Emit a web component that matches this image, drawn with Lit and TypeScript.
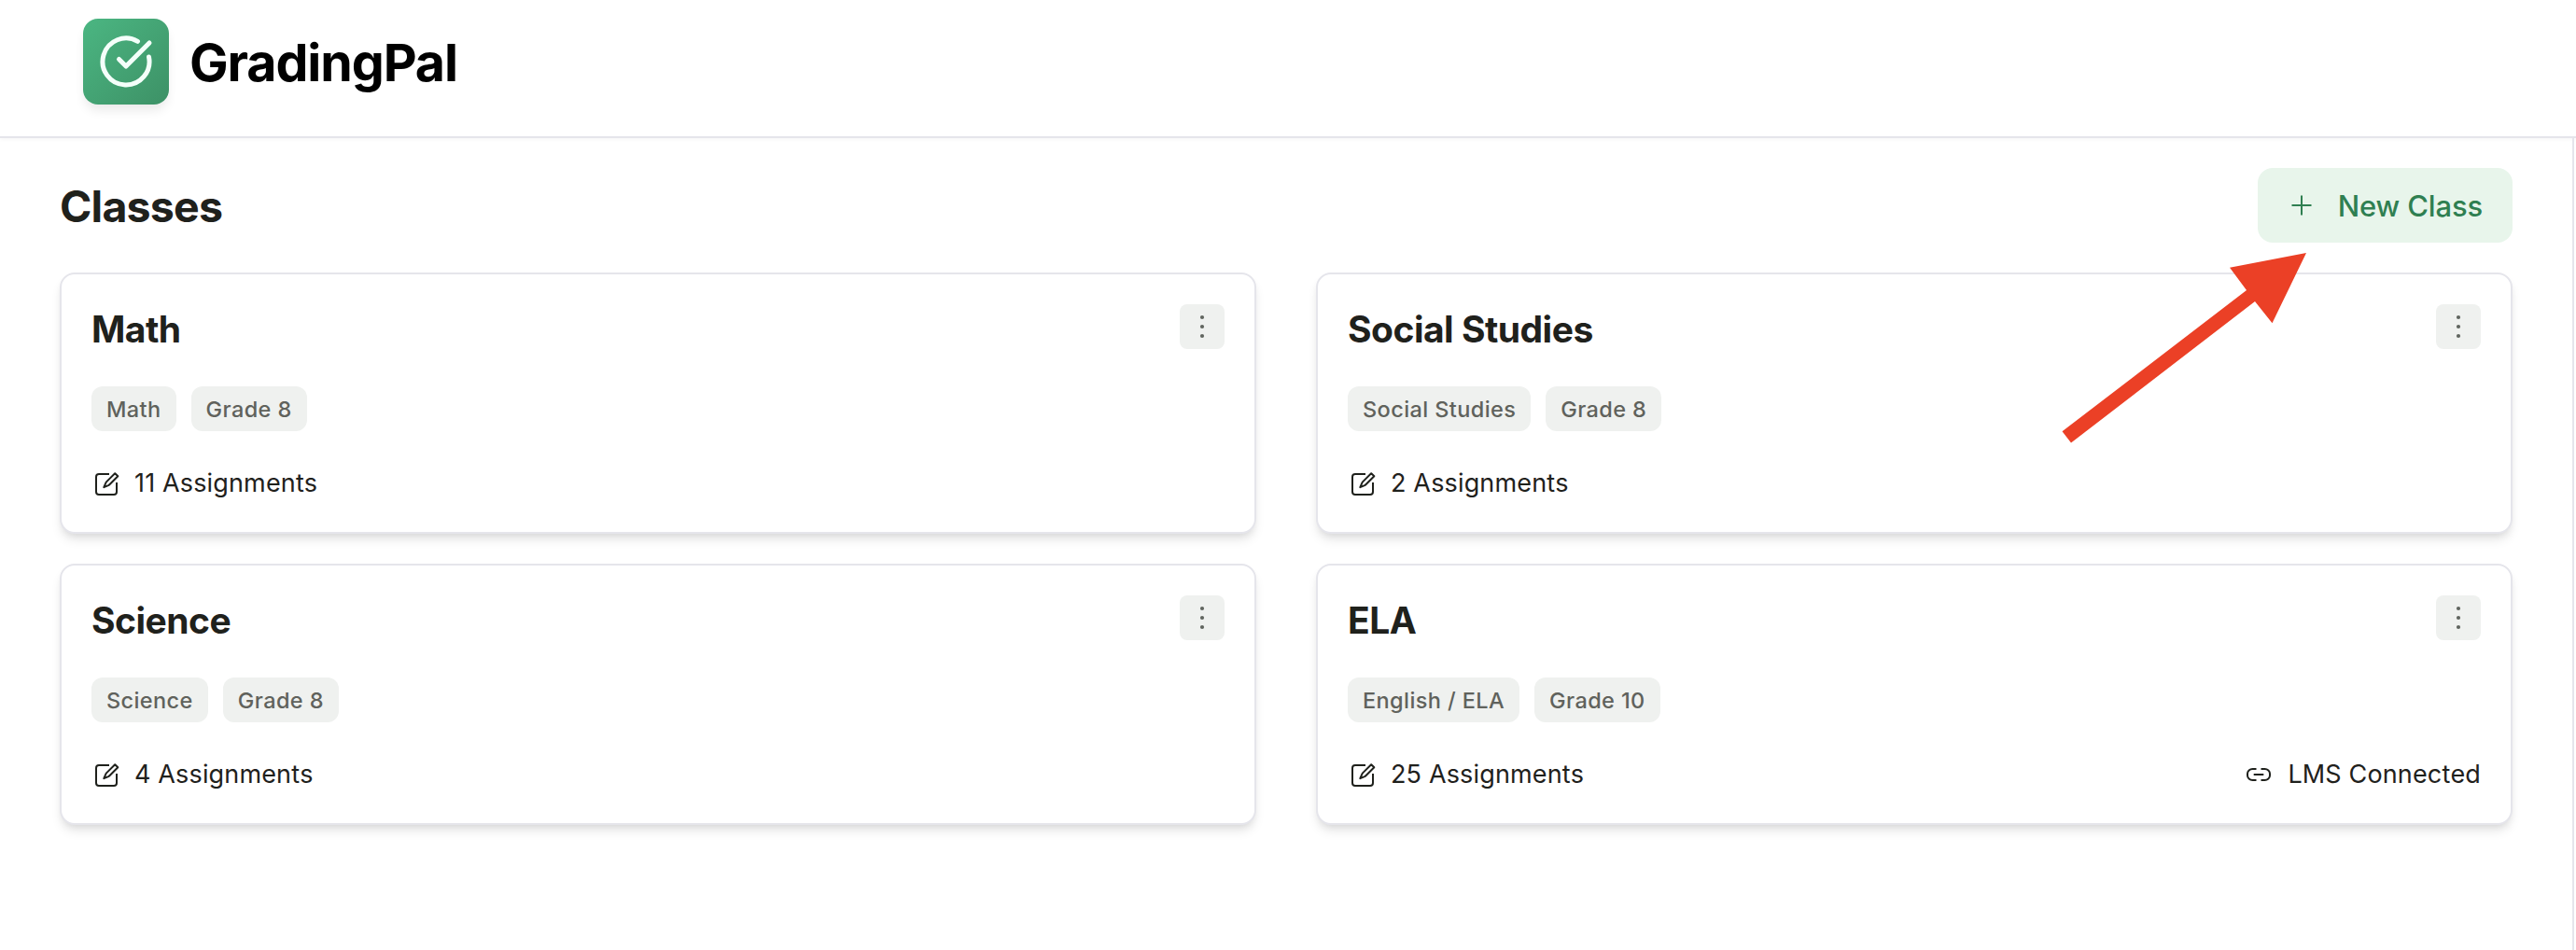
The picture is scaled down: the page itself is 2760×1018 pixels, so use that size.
import { LitElement, html, css, svg, nothing } from "lit";
import { customElement, property } from "lit/decorators.js";

interface ClassInfo {
  name: string;
  subject: string;
  grade: string;
  assignments: number;
  lms?: boolean;
}

const CLASSES: ClassInfo[] = [
  { name: "Math", subject: "Math", grade: "Grade 8", assignments: 11 },
  { name: "Social Studies", subject: "Social Studies", grade: "Grade 8", assignments: 2 },
  { name: "Science", subject: "Science", grade: "Grade 8", assignments: 4 },
  { name: "ELA", subject: "English / ELA", grade: "Grade 10", assignments: 25, lms: true },
];

@customElement("class-card")
export class ClassCard extends LitElement {
  @property({ attribute: false }) info!: ClassInfo;

  static styles = css`
    :host {
      box-sizing: border-box;
      display: flex;
      flex-direction: column;
      height: 280px;
      padding: 32px 32px 28px;
      border: 2px solid #e5e5eb;
      border-radius: 16px;
      background: #fff;
      box-shadow: 0 8px 12px -2px rgba(0, 0, 0, 0.1), 0 4px 8px -4px rgba(0, 0, 0, 0.1);
    }
    .top, .bottom { display: flex; flex: none; justify-content: space-between; }
    .top { height: 88px; align-items: flex-start; }
    .title {
      margin: 0;
      font-size: 39px;
      line-height: 54px;
      font-weight: 700;
      letter-spacing: -0.5px;
    }
    .menu {
      display: grid;
      place-items: center;
      width: 48px;
      height: 48px;
      padding: 0;
      border: 0;
      border-radius: 8px;
      background: #eff1ef;
      color: #60655f;
    }
    .tags { display: flex; flex: none; height: 48px; gap: 16px; }
    .tag {
      height: 48px;
      padding: 0 16px;
      border-radius: 12px;
      background: #eff1ef;
      color: #60625c;
      font-size: 23.5px;
      line-height: 49px;
      font-weight: 500;
      letter-spacing: 0.4px;
      white-space: nowrap;
    }
    .bottom {
      margin-top: 34px;
      font-size: 27px;
      letter-spacing: 0.15px;
      font-kerning: none;
    }
    .meta { display: flex; align-items: center; gap: 16px; white-space: nowrap; }
    .label { line-height: 44px; }
    svg { display: block; }
  `;

  render() {
    const c = this.info;
    return html`
      <div class="top">
        <h2 class="title">${c.name}</h2>
        <button class="menu" aria-label="Class options">
          <svg width="30" height="30" viewBox="0 0 30 30" fill="currentColor">
            <circle cx="15" cy="5" r="2.1" /><circle cx="15" cy="15" r="2.1" /><circle cx="15" cy="25" r="2.1" />
          </svg>
        </button>
      </div>
      <div class="tags"><span class="tag">${c.subject}</span><span class="tag">${c.grade}</span></div>
      <div class="bottom">
        <span class="meta">
          <svg width="30" height="30" viewBox="0 -1 30 30" fill="none" stroke="currentColor" stroke-width="2" stroke-linejoin="round">
            <path d="M19 4H8Q5 4 5 7V23Q5 26 8 26H24Q27 26 27 23V13" />
            <path d="M13.3 18.2L15.4 13.4Q15.8 12.6 16.5 11.9L25.2 3.2L28.3 6.3L19.6 15Q18.9 15.7 18.1 16.1Z" />
          </svg>
          <span class="label">${c.assignments} Assignments</span>
        </span>
        ${c.lms
          ? html`<span class="meta">
              <svg width="30" height="30" viewBox="0 -1 30 30" fill="none" stroke="currentColor" stroke-width="2">
                <path d="M12.5 8H8.5A5.5 5 0 0 0 3 13V15A5.5 5 0 0 0 8.5 20H12.5M17.5 8H21.5A5.5 5 0 0 1 27 13V15A5.5 5 0 0 1 21.5 20H17.5M9.7 14H20.3" />
              </svg>
              <span class="label">LMS Connected</span>
            </span>`
          : nothing}
      </div>
    `;
  }
}

@customElement("app-root")
export class AppRoot extends LitElement {
  static styles = css`
    :host {
      position: relative;
      display: flex;
      flex-direction: column;
      height: 1018px;
      overflow: hidden;
      background: #fff;
      color: #1f211c;
      font-family: Inter, "Liberation Sans", sans-serif;
    }
    .header {
      box-sizing: border-box;
      display: flex;
      gap: 22px;
      height: 148px;
      padding: 20px 0 0 89px;
      border-bottom: 2px solid #e5e5eb;
      box-shadow: 0 2px 4px rgba(0, 0, 0, 0.03);
    }
    .logo {
      display: grid;
      place-items: center;
      width: 92px;
      height: 92px;
      border-radius: 16px;
      background: linear-gradient(135deg, #4bb682, #3d9166);
      box-shadow: 0 8px 12px -2px rgba(0, 0, 0, 0.09);
    }
    .brand {
      color: #000;
      font-size: 55.5px;
      font-weight: 700;
      line-height: 94px;
      letter-spacing: -1.1px;
    }
    .main {
      box-sizing: border-box;
      flex: 1;
      margin-right: 2px;
      padding: 32px 64px 0;
      border-right: 2px solid #e5e5eb;
    }
    .heading { display: flex; justify-content: space-between; height: 112px; }
    .page-title {
      margin: 0;
      font-size: 46.5px;
      line-height: 82px;
      font-weight: 700;
      letter-spacing: -0.8px;
    }
    .new {
      display: flex;
      align-items: center;
      gap: 24px;
      height: 80px;
      padding: 0 32px;
      border: 0;
      border-radius: 16px;
      background: #e8f5eb;
      color: #2f7f51;
      font: 500 31px Inter, "Liberation Sans", sans-serif;
      letter-spacing: -0.15px;
      white-space: nowrap;
    }
    .grid { display: grid; grid-template-columns: 1fr 1fr; gap: 32px 64px; }
    .arrow {
      position: absolute;
      left: 2200px;
      top: 260px;
      pointer-events: none;
    }
  `;

  render() {
    return html`
      <header class="header">
        <div class="logo">
          <svg width="60" height="60" viewBox="0 0 24 24" fill="none" stroke="#f4fffa" stroke-width="2" stroke-linecap="round" stroke-linejoin="round">
            <path d="M21.801 10A10 10 0 1 1 17 3.335" /><path d="m9 11 3 3L22 4" />
          </svg>
        </div>
        <div class="brand">GradingPal</div>
      </header>
      <main class="main">
        <div class="heading">
          <h1 class="page-title">Classes</h1>
          <button class="new">
            <svg width="30" height="30" viewBox="0 0 30 30" fill="none" stroke="currentColor" stroke-width="2">
              <path d="M15 4.5V25.5M4.5 15H25.5" />
            </svg>
            <span>New Class</span>
          </button>
        </div>
        <div class="grid">${CLASSES.map((c) => html`<class-card .info=${c}></class-card>`)}</div>
      </main>
      <svg class="arrow" width="280" height="220" viewBox="2200 260 280 220">
        ${svg`<path fill="#eb4026" d="M2471 271L2389 286.7L2407 311L2209.5 462.3L2219 474.5L2416 323L2434.5 346.3Z" />`}
      </svg>
    `;
  }
}
